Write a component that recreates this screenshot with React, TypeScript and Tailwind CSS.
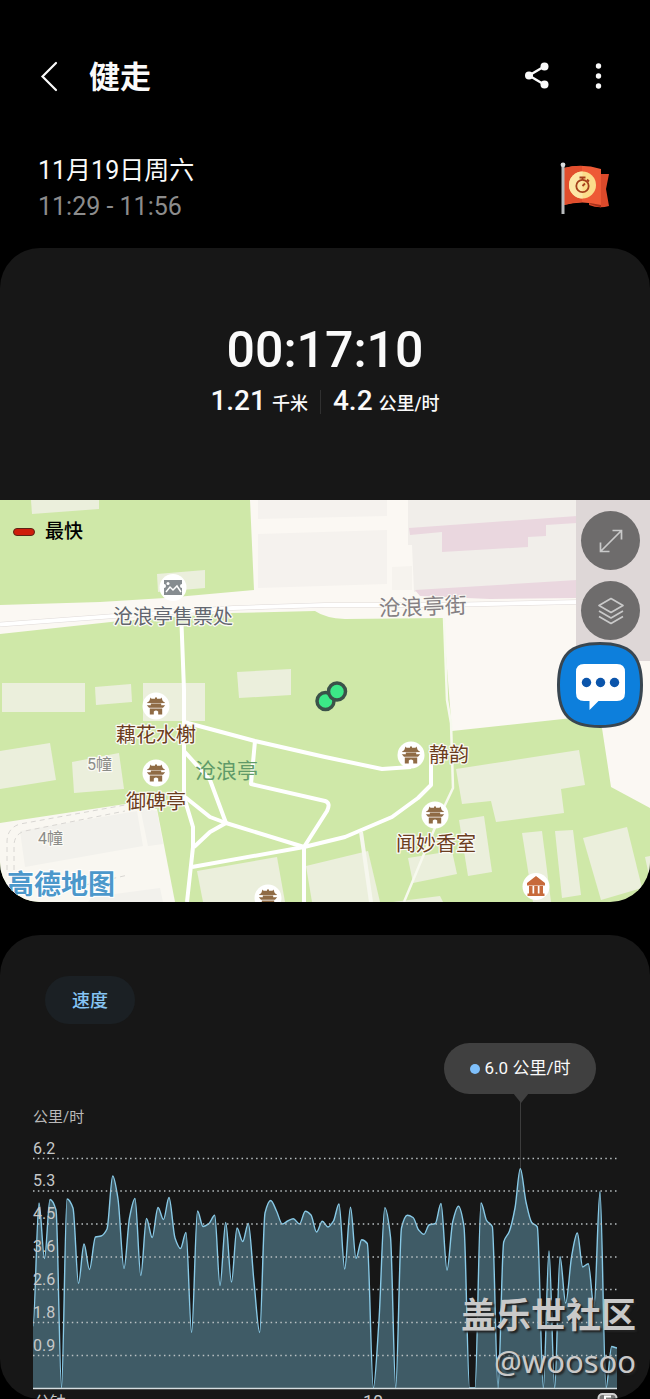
import React from "react";

type Point = [number, number];

const SPEED_POINTS: Point[] = [
  [33, 1326], [39, 1203], [44.5, 1258.5], [50, 1199.5], [56, 1210], [61.5, 1388], [67, 1199], [73, 1208],
  [78.5, 1283.5], [84, 1244], [89.5, 1269.5], [95.5, 1237], [101, 1236], [107, 1229], [112.7, 1176], [118, 1199],
  [124, 1268.5], [129.5, 1218], [135, 1198.5], [140.8, 1275.5], [146.5, 1218.5], [152.2, 1237.5], [158, 1207.5],
  [163.5, 1219.5], [169, 1197.5], [175, 1238], [180.5, 1248.5], [186, 1232.5], [191.6, 1332.5], [197.5, 1211],
  [203, 1226.5], [209, 1223.5], [214.7, 1215.3], [220, 1285.5], [225.7, 1222.5], [231.5, 1282], [237, 1228],
  [242.7, 1241.5], [248.3, 1223.5], [254, 1282], [259.7, 1332.5], [265, 1213], [270.7, 1200.5], [276.5, 1211],
  [282.3, 1224], [287.7, 1221], [293.3, 1218.7], [299.5, 1224], [305.3, 1211.3], [311, 1215], [316.5, 1232],
  [322.3, 1221.3], [328, 1227], [333.5, 1221], [339, 1204], [344.7, 1269], [350.5, 1207.3], [356, 1258.3],
  [361.7, 1239.7], [367.3, 1243.5], [373.3, 1388], [379, 1320], [384.8, 1207.6], [390.5, 1237], [395.7, 1388],
  [401.5, 1228], [407.3, 1215.3], [413, 1217.5], [418.7, 1230], [424, 1234.3], [429, 1225], [435.3, 1223.5],
  [441, 1203.5], [447, 1270], [452.7, 1222], [458.4, 1206.3], [464, 1227], [469.5, 1388], [475, 1388],
  [481, 1203], [486.7, 1220.7], [492.3, 1226.5], [498, 1388], [503.7, 1242], [509.3, 1231.5], [515, 1208],
  [520.3, 1168.7], [526, 1202], [531.7, 1222.5], [537.3, 1227], [543.3, 1388], [549, 1251], [554.7, 1388],
  [560, 1256.7], [565.7, 1303], [571.7, 1256], [577.3, 1233], [582.7, 1267], [588.3, 1263.7], [594, 1307],
  [600, 1191.5], [606, 1388], [611.7, 1346.5], [617, 1348],
];

// Monotone cubic interpolation: no overshoot at local peaks and troughs.
function smoothPath(points: Point[]): string {
  const slopes = points.map((p, i) => {
    const a = points[i - 1];
    const b = points[i + 1];
    if (!a || !b) return 0;
    const left = (p[1] - a[1]) / (p[0] - a[0]);
    const right = (b[1] - p[1]) / (b[0] - p[0]);
    if (left * right <= 0) return 0;
    return (2 * left * right) / (left + right);
  });
  let d = `M${points[0][0]},${points[0][1]}`;
  for (let i = 1; i < points.length; i++) {
    const [x0, y0] = points[i - 1];
    const [x1, y1] = points[i];
    const h = (x1 - x0) / 3;
    d += `C${(x0 + h).toFixed(2)},${(y0 + slopes[i - 1] * h).toFixed(2)} ${(x1 - h).toFixed(2)},${(y1 - slopes[i] * h).toFixed(2)} ${x1},${y1}`;
  }
  return d;
}

const AXIS = [
  { label: "6.2", y: 1158.5 },
  { label: "5.3", y: 1191 },
  { label: "4.5", y: 1224 },
  { label: "3.6", y: 1257 },
  { label: "2.6", y: 1289.5 },
  { label: "1.8", y: 1322.5 },
  { label: "0.9", y: 1355.5 },
];

const BUILDINGS = [
  "31,500 99,500 99,509 32,514",
  "157,574 205,570 205,588 158,592",
  "2,683 85,683 85,712 2,712",
  "95,687 131,684 132,702 96,705",
  "143,683 205,683 205,721 143,721",
  "237,672 291,669 291,695 239,698",
  "0,751 50,743 56,780 0,789",
  "72,762 119,753 124,789 74,793",
  "197,871 277,857 285,902 203,902",
  "306,866 368,851 380,902 312,902",
  "456,769 579,750 585,785 561,789 564,813 496,822 491,801 462,804",
  "459,820 484,816 492,872 468,876",
  "408,858 452,851 457,874 413,883",
  "522,833 542,831 551,902 533,902",
  "555,831 573,830 581,895 562,898",
  "583,838 627,827 642,888 601,900",
  "645,857 650,856 650,880",
  "393,902 440,896 443,902",
];

function Pagoda({ x, y }: { x: number; y: number }) {
  return (
    <g transform={`translate(${x} ${y})`}>
      <circle r="13.5" fill="#fff" />
      <path
        fill="#8f6b45"
        d="M-5.5-8.5 L-4.5-7.2 H-1 V-8.6 H1 V-7.2 H4.5 L5.5-8.5 L6.6-5.2 L8.6-3.2 H-8.6 L-6.6-5.2Z M-5.2-2.4 H5.2 V-0.8 H9.2 L7 1.8 H-7 L-9.2-0.8 H-5.2Z M-6.2 2.6 H6.2 V8.6 H2.2 V5.6 Q0 3.6-2.2 5.6 V8.6 H-6.2Z"
      />
      <path d="M-8.600-3.400 H8.600" stroke="#8f6b45" strokeWidth="1" />
    </g>
  );
}

function MapLabel({ x, y, size, fill, children }: { x: number; y: number; size: number; fill: string; children: string }) {
  return (
    <text x={x} y={y} fontSize={size} fill={fill} stroke="#fbfaf5" strokeWidth="2.5" strokeLinejoin="round" paintOrder="stroke">
      {children}
    </text>
  );
}

function RouteMap() {
  return (
    <svg viewBox="0 500 650 402" className="block h-auto w-full" role="img" aria-label="沧浪亭">
      <rect x="0" y="500" width="650" height="402" fill="#cfe8a8" />
      <path
        fill="#fbf8f3"
        d="M0,605 L100,602 L165,598 L254,590 L250,500 H650 V808 L611,787 L600,715 L452,731 L443,618 L345,619 Q325,618 315,611 L230,613 L120,621 L0,634Z"
      />
      <path fill="#f5f2ee" d="M258,500H387V516L258,519Z M258,534L387,530V584L258,588Z" />
      <path fill="#f1eeea" d="M408,500H577V590L414,592L412,545H408Z" />
      <path fill="#f6f3ee" d="M392,567L412,566V590H392Z" />
      <path fill="#ead7df" d="M409,528L577,516V523L546,525V536L528,537V547L442,552V532L410,535Z M415,590L577,580V598L490,599L420,596Z" />
      <path d="M0,624.5 L115,616 L233,608 L325,605 L440,605 L650,600.5" fill="none" stroke="#dfdad8" strokeWidth="5" />
      <path d="M0,624.5 L115,616 L233,608 L325,605 L440,605 L650,600.5" fill="none" stroke="#fff" strokeWidth="4" />
      <path fill="#f9f7f1" d="M0,823L132,803L157,809L175,902H0Z" />
      <path fill="#f2f1ec" d="M20,831L137,811L143,846L25,867Z M140,807L157,811L163,844L148,846Z M92,897L160,888L163,902H88Z" />
      <path d="M7,870V842Q7,828 20,824L125,805 M14,870V846Q14,834 25,831L125,811 M85,885L128,875" fill="none" stroke="#d8d6d2" strokeWidth="1" strokeDasharray="5 4" />
      {BUILDINGS.map((points) => (
        <polygon key={points} points={points} fill="#ebefdc" />
      ))}

      <g fill="none" stroke="#fff" strokeWidth="4" strokeLinejoin="round">
        <path d="M181.500,624L184,690V797L193,827V847L187,902" />
        <path d="M184,722L255,741L325,757L382,769L411,767" />
        <path d="M184,751L210,780L226,823" />
        <path d="M185,797L210,817L226,823L304,847V902" />
        <path d="M226,823L210,832L194,847" />
        <path d="M192,867L304,847L345,837L392,817L418,798L431,785V752" />
        <path d="M255,741L251,784L325,801Q331,803 327,811L304,847" />
      </g>
      <path d="M361,832L371,902" fill="none" stroke="#f6f7ee" strokeWidth="4" />
      <path d="M444,618L447,700L451,723L453,788L445,805L434,830L404,902" fill="none" stroke="#f7f9ee" strokeWidth="2.500" />

      <g>
        <circle cx="173" cy="587.500" r="13.500" fill="#fff" />
        <path fill="#868c90" d="M164,580H182V584A2,2 0 0 0 182,588V595H164V588A2,2 0 0 0 164,584Z" />
        <path d="M166,592L170,587L173,590L177,586L181,592" fill="none" stroke="#fff" strokeWidth="1.500" />
        <circle cx="168" cy="583.500" r="1.500" fill="#fff" />
      </g>
      <Pagoda x={156} y={706} />
      <Pagoda x={156} y={773} />
      <Pagoda x={411} y={755} />
      <Pagoda x={435} y={815} />
      <Pagoda x={268} y={898} />
      <g>
        <circle cx="536" cy="886.500" r="13.500" fill="#fff" />
        <path fill="#c76a3b" d="M536,876L545,883V885.500H527V883Z M529,886H532.500V893.500H529Z M534.200,886H537.800V893.500H534.200Z M539.500,886H543V893.500H539.500Z M527.500,893.500H544.500V896H527.500Z" />
      </g>

      <MapLabel x={113} y={624} size={20} fill="#62666f">沧浪亭售票处</MapLabel>
      <text x="379" y="616" fontSize="22" fill="#858083" stroke="#fbfaf5" strokeWidth="2" paintOrder="stroke" transform="rotate(-2 379 616)">
        沧浪亭街
      </text>
      <MapLabel x={116} y={742} size={20} fill="#6b3d20">藕花水榭</MapLabel>
      <MapLabel x={126} y={809} size={20} fill="#6b3d20">御碑亭</MapLabel>
      <MapLabel x={429} y={762} size={20} fill="#6b3d20">静韵</MapLabel>
      <MapLabel x={396} y={851} size={20} fill="#6b3d20">闻妙香室</MapLabel>
      <text x="195" y="778" fontSize="21" fill="#5f9a68">沧浪亭</text>
      <MapLabel x={87} y={770} size={16} fill="#8b8c88">5幢</MapLabel>
      <MapLabel x={38} y={844} size={16} fill="#8b8c88">4幢</MapLabel>
      <text x="7" y="894" fontSize="27" fontWeight="700" fill="#4c98cb" stroke="#fff" strokeWidth="2" paintOrder="stroke">
        高德地图
      </text>

      <g stroke="#3b5249" strokeWidth="3.500" fill="#3ce887">
        <circle cx="325.500" cy="701" r="8.500" />
        <circle cx="337" cy="691.500" r="8.500" />
      </g>
    </svg>
  );
}

function Flag() {
  return (
    <svg viewBox="0 0 54 54" className="size-[54px]" role="img" aria-label="目标">
      <path d="M33 12 H51 L48 27 L51 44 Q41 47 31 43Z" fill="#dc4a2b" />
      <path d="M31 40 L43 41 V45.500 L32 42Z" fill="#a5301b" />
      <path d="M6 6 Q24 1 43 7 V43 Q24 38 6 43Z" fill="#ee5a36" />
      <path d="M6 6 Q15 3.500 24 4 V40 Q14 40.500 6 43Z" fill="#e14e2d" />
      <rect x="3.500" y="2" width="3" height="50" fill="#b9bbbd" />
      <circle cx="5" cy="2.800" r="2.400" fill="#dadcdd" />
      <circle cx="24.500" cy="23" r="13.500" fill="#fbdd8b" />
      <path d="M24.500 9.500 A13.500 13.500 0 0 0 24.500 36.500Z" fill="#fde6a6" />
      <circle cx="24.500" cy="24" r="6.200" fill="none" stroke="#a6401c" strokeWidth="1.800" />
      <path d="M21.500 15.500H27.500 M24.500 15.500V18 M29 17.500L31 19.500 M24.500 24L27 21.500" stroke="#a6401c" strokeWidth="1.800" />
    </svg>
  );
}

function SpeedChart() {
  const line = smoothPath(SPEED_POINTS);
  return (
    <svg viewBox="0 1094 650 305" className="block h-auto w-full" role="img" aria-label="速度图表">
      <text x="33" y="1122" fontSize="15" fill="#b9b9b9">公里/时</text>
      <path d="M520.500,1094V1169" stroke="#3c3c3c" strokeWidth="1" />
      <path d={`${line}V1388.500H33Z`} fill="#3f5b66" />
      <path d={line} fill="none" stroke="#88c9e6" strokeWidth="1.400" />
      {AXIS.map(({ label, y }) => (
        <g key={label}>
          <path d={`M33,${y}H617`} stroke="#b9c0c2" strokeWidth="1.300" strokeDasharray="1.500 3.350" />
          <text x="33" y={y - 5} fontSize="16" fill="#c6c8c9">{label}</text>
        </g>
      ))}
      <path d="M33,1388.500H617" stroke="#d5dde0" strokeWidth="1.500" />
      <text x="34" y="1408" fontSize="16" fill="#c6c8c9">分钟</text>
      <text x="363" y="1408" fontSize="18" fill="#c6c8c9">10</text>
      <rect x="598.500" y="1394" width="18" height="14" rx="4" fill="#777" stroke="#d2d2d2" strokeWidth="2" />
      <path d="M605,1399V1396.500H611" fill="none" stroke="#fff" strokeWidth="2" />
    </svg>
  );
}

export default function App() {
  return (
    <div className="w-full overflow-hidden bg-black font-['Roboto','Noto_Sans_CJK_SC',sans-serif] text-[#fafafa]" lang="zh-CN">
      <header className="flex items-center px-[38px] pt-[46px]">
        <button type="button" aria-label="返回" className="flex h-[60px] w-[51px] items-center">
          <svg viewBox="0 0 24 32" className="h-8 w-6" fill="none" stroke="currentColor" strokeWidth="2.200" strokeLinecap="round">
            <path d="M18 3L4.500 16.500L18 30" />
          </svg>
        </button>
        <h1 className="h-[60px] flex-1 text-[31px] leading-[64px] font-bold">健走</h1>
        <button type="button" aria-label="分享" className="flex size-8 items-center justify-center">
          <svg viewBox="0 0 32 32" className="size-8" fill="currentColor">
            <path d="M24 6L8 15.500L24 25" fill="none" stroke="currentColor" strokeWidth="2.400" />
            <circle cx="23.500" cy="6.500" r="4" />
            <circle cx="8" cy="15.500" r="4" />
            <circle cx="23.500" cy="24.500" r="4" />
          </svg>
        </button>
        <button type="button" aria-label="更多" className="ml-[31px] flex h-8 w-7 items-center justify-center">
          <svg viewBox="0 0 28 32" className="h-8 w-7" fill="currentColor">
            <circle cx="14.500" cy="6" r="2.700" />
            <circle cx="14.500" cy="16" r="2.700" />
            <circle cx="14.500" cy="26" r="2.700" />
          </svg>
        </button>
      </header>

      <section className="flex items-center justify-between px-[38px] pt-[47px] pb-[23px]">
        <div className="text-[25px] leading-9">
          <p>11月19日周六</p>
          <p className="text-[#8c8c8c]">11:29 - 11:56</p>
        </div>
        <Flag />
      </section>

      <main>
        <section className="overflow-hidden rounded-[40px] bg-[#171717]">
          <div className="flex flex-col items-center gap-1 pt-[72px] pb-20 font-medium">
            <p className="text-[50px] leading-[60px]">00:17:10</p>
            <div className="flex h-9 items-center leading-9">
              <p className="flex items-baseline gap-[6px] text-[28px]">
                1.21 <span className="text-[18px]">千米</span>
              </p>
              <span className="mx-3 h-6 w-px bg-[#303030]" />
              <p className="flex items-baseline gap-[6px] text-[28px]">
                4.2 <span className="text-[18px]">公里/时</span>
              </p>
            </div>
          </div>

          <div className="relative">
            <RouteMap />
            <div className="absolute top-[18px] left-[13px] flex items-center gap-[10px] text-[19px] leading-7 font-medium text-black">
              <span className="h-2 w-[22px] rounded-full border border-[#5c2416] bg-[#cf1d0c]" />
              最快
            </div>
            <div className="absolute top-0 right-0 flex h-[161px] w-[74px] flex-col items-center gap-[11px] bg-[#ded7d7] pt-[11px] pr-[5px]">
              <button type="button" aria-label="全屏" className="flex size-[59px] shrink-0 items-center justify-center rounded-full bg-[#6e6c6c]">
                <svg viewBox="0 0 26 26" className="size-[26px]" fill="none" stroke="#c9c9c9" strokeWidth="1.700">
                  <path d="M2.500 23.500L23.500 2.500M14.500 2.500H23.500V11.500M2.500 14.500V23.500H11.500" />
                </svg>
              </button>
              <button type="button" aria-label="图层" className="flex size-[59px] shrink-0 items-center justify-center rounded-full bg-[#6e6c6c]">
                <svg viewBox="0 0 28 28" className="size-7" fill="none" stroke="#c9c9c9" strokeWidth="1.700" strokeLinejoin="round">
                  <path d="M14 1.500L26 8.500L14 15.500L2 8.500ZM2 14L14 21L26 14M2 19.500L14 26.500L26 19.500" />
                </svg>
              </button>
            </div>
            <button type="button" aria-label="消息" className="absolute top-[141px] right-[6px] size-[88px]">
              <svg viewBox="0 0 88 88" className="size-[88px]">
                <path
                  d="M44 2.500C74 2.500 85.500 14 85.500 44S74 85.500 44 85.500S2.500 74 2.500 44S14 2.500 44 2.500Z"
                  fill="#0d7fdc"
                  stroke="#394650"
                  strokeWidth="3"
                />
                <path d="M28 23H61Q69 23 69 31V52Q69 60 61 60H42.500L33.500 69V60H28Q20 60 20 52V31Q20 23 28 23Z" fill="#fff" />
                <circle cx="30.500" cy="41.500" r="4.700" fill="#0b55ab" />
                <circle cx="44.500" cy="41.500" r="4.700" fill="#0b55ab" />
                <circle cx="58.500" cy="41.500" r="4.700" fill="#0b55ab" />
              </svg>
            </button>
          </div>
        </section>

        <section className="relative mt-[33px] overflow-hidden rounded-[40px] bg-[#171717] pt-[41px]">
          <button type="button" className="ml-[45px] block h-12 w-[90px] rounded-full bg-[#1b2024] text-[18px] font-medium text-[#86c4f4]">
            速度
          </button>
          <div className="relative pt-[70px]">
            <SpeedChart />
            <div className="absolute top-[19px] left-[80%] flex h-[51px] w-[152px] -translate-x-1/2 items-center justify-center gap-[5px] rounded-full bg-[#404040] text-[17px]">
              <span className="size-[10px] rounded-full bg-[#7fc0fb]" />
              6.0 公里/时
              <svg viewBox="0 0 16 10" className="absolute top-[50px] left-[69px] h-[10px] w-4" fill="#404040">
                <path d="M0 0H16L8 10Z" />
              </svg>
            </div>
          </div>
          <div className="absolute right-[14px] bottom-[18px] text-right text-[#c9c9c9] [text-shadow:2px_2px_2px_#222]">
            <p className="text-[35px] leading-[48px] font-bold">盖乐世社区</p>
            <p className="font-['Noto_Sans',sans-serif] text-[31px] leading-[40px]">@woosoo</p>
          </div>
        </section>
      </main>
    </div>
  );
}
